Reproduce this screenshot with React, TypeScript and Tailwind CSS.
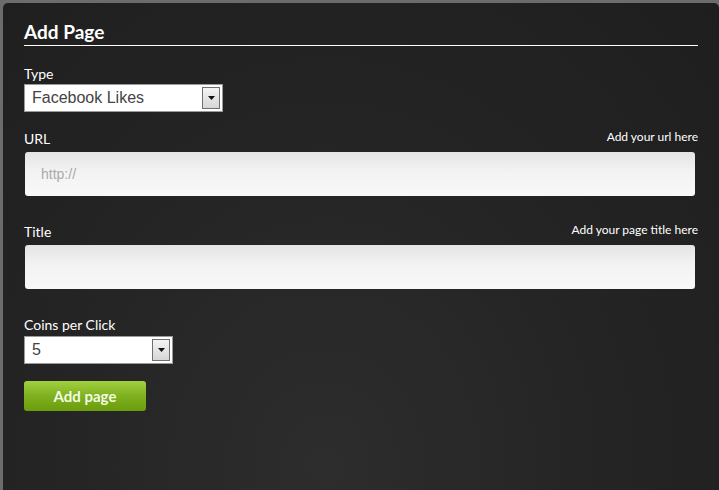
const font = { fontFamily: 'Lato, "Open Sans", sans-serif' };

function FakeSelect({ value, width }: { value: string; width: string }) {
  return (
    <div
      className={`${width} h-[28px] bg-white border border-[#9a9a9a] flex items-center justify-between pl-[7px] pr-[2px]`}
    >
      <span className="text-[16px] text-[#444] leading-none" style={{ fontFamily: '"Liberation Sans", Arial, sans-serif' }}>
        {value}
      </span>
      <span className="w-[18px] h-[22px] border border-[#6f6f6f] bg-[linear-gradient(#f4f4f4,#d6d6d6)] flex items-center justify-center">
        <svg width="7" height="4" viewBox="0 0 7 4">
          <path d="M0 0h7L3.5 4z" fill="#111" />
        </svg>
      </span>
    </div>
  );
}

function TextField({ placeholder }: { placeholder?: string }) {
  return (
    <div className="ml-[1px] w-[670px] h-[44px] rounded-[3px] bg-[linear-gradient(#e4e4e4,#f3f3f3_45%,#f8f8f8)] flex items-center pl-[16px]">
      {placeholder && (
        <span className="text-[14px] text-[#aaa]" style={{ fontFamily: '"Liberation Sans", Arial, sans-serif' }}>
          {placeholder}
        </span>
      )}
    </div>
  );
}

function FieldLabel({ label, hint }: { label: string; hint?: string }) {
  return (
    <div className="flex items-end justify-between w-[674px] h-[16px]">
      <span className="text-[14px] text-white leading-none">{label}</span>
      {hint && <span className="text-[12px] text-white leading-none mb-[3px]">{hint}</span>}
    </div>
  );
}

export default function App() {
  return (
    <div className="w-[719px] h-[490px] bg-[#6c6c6c] pt-[3px] pl-[3px] overflow-hidden" style={font}>
      <div className="h-[487px] rounded-t-[5px] bg-[radial-gradient(ellipse_at_45%_95%,#2d2d2d_0%,#252525_45%,#1e1e1e_100%)] pl-[21px] pt-[18px]">
        <h1 className="text-[19px] font-bold text-white leading-none pt-[1px]">Add Page</h1>
        <div className="mt-[4px] w-[674px] h-px bg-white" />

        <div className="mt-[19px]">
          <FieldLabel label="Type" />
          <div className="mt-[3px]">
            <FakeSelect value="Facebook Likes" width="w-[199px]" />
          </div>
        </div>

        <div className="mt-[18px]">
          <FieldLabel label="URL" hint="Add your url here" />
          <div className="mt-[6px]">
            <TextField placeholder="http://" />
          </div>
        </div>

        <div className="mt-[27px]">
          <FieldLabel label="Title" hint="Add your page title here" />
          <div className="mt-[6px]">
            <TextField />
          </div>
        </div>

        <div className="mt-[27px]">
          <FieldLabel label="Coins per Click" />
          <div className="mt-[4px]">
            <FakeSelect value="5" width="w-[149px]" />
          </div>
        </div>

        <button
          type="button"
          className="mt-[17px] w-[122px] h-[30px] rounded-[3px] bg-[linear-gradient(#a2d040,#7fb01f_50%,#6a9c0c)] text-[15px] font-bold text-[#f3fbe4] flex items-center justify-center"
        >
          Add page
        </button>
      </div>
    </div>
  );
}
